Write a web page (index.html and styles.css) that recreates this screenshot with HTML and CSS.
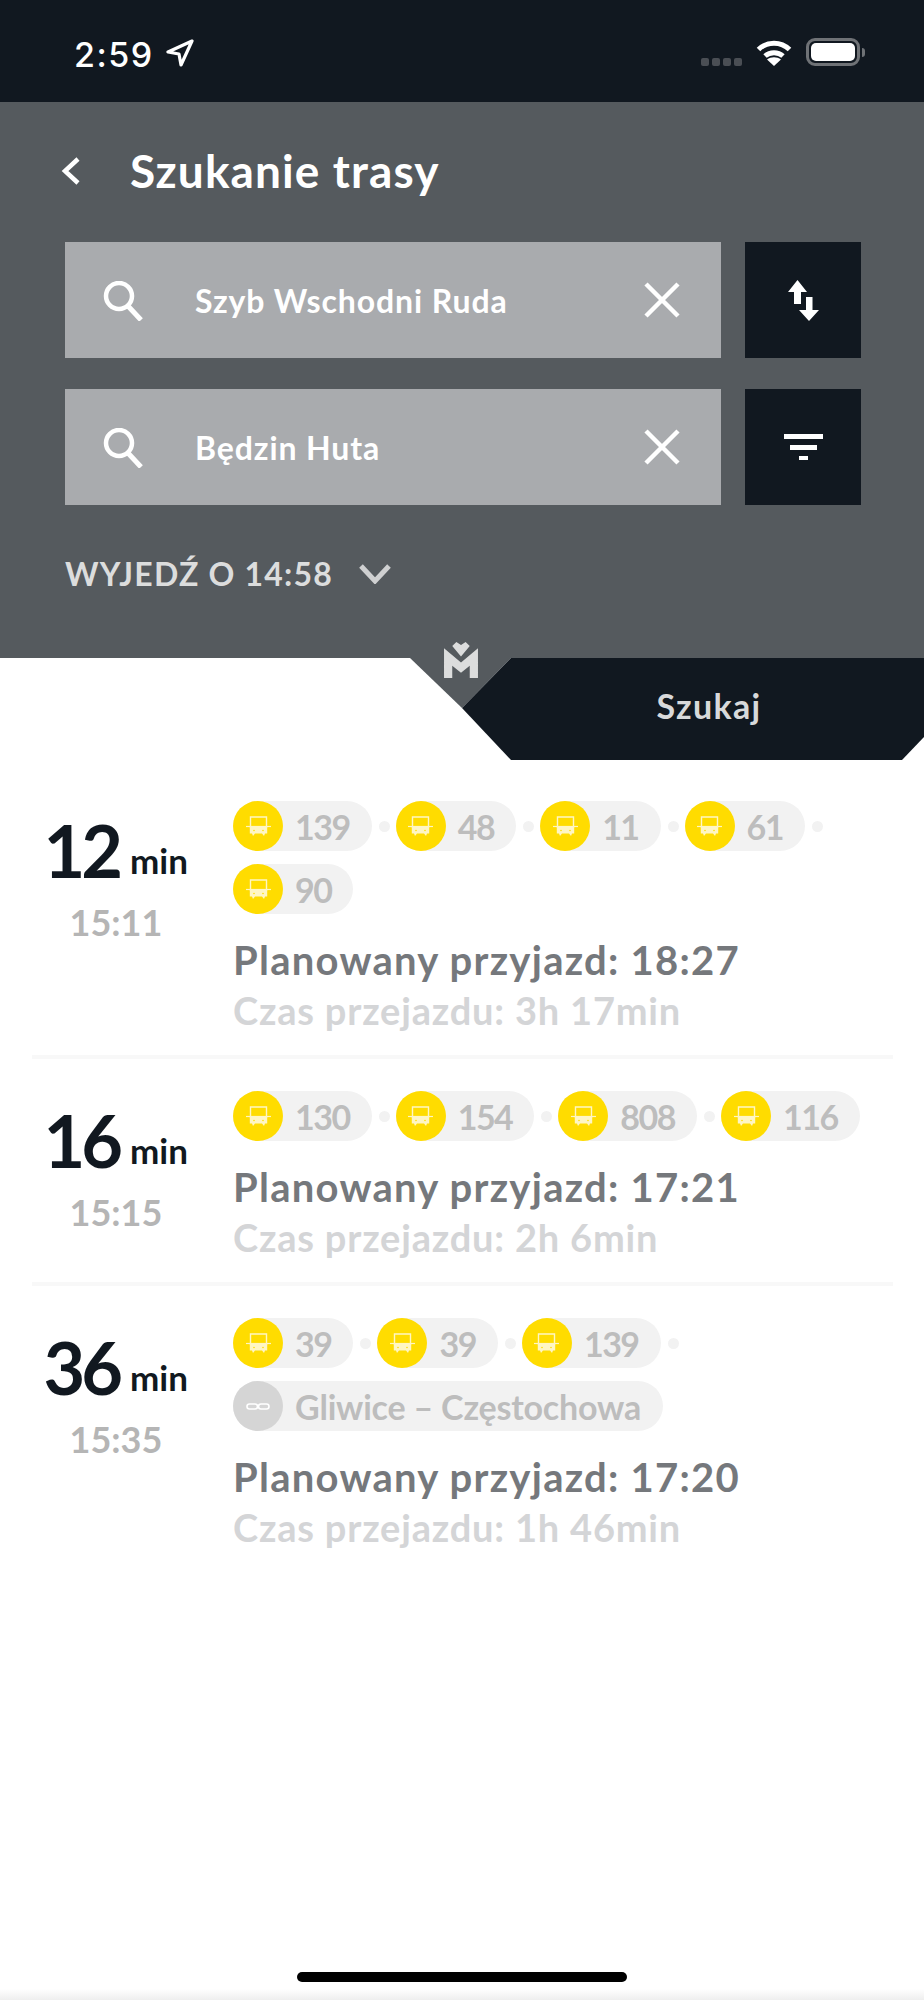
FILE: index.html
```html
<!DOCTYPE html>
<html lang="pl">
<head>
	<meta charset="UTF-8">
	<meta name="viewport" content="width=device-width, initial-scale=1.0" />
	<title>Szukanie trasy</title>
	<link rel="stylesheet" href="styles.css">
</head>
<body>
<svg class="defs" aria-hidden="true">
	<symbol id="bus" viewBox="0 0 25 21">
		<path d="M4.500 1h16v10h-16z" fill="none" stroke="#fff6c4" stroke-width="1.400"/>
		<path d="M0 10.500h25" stroke="#fff6c4" stroke-width="1.200"/>
		<path d="M3.800 11h17.400v6.500H19l-1 2.500-2-2.500H9l-2 2.500-1-2.500H3.800z" fill="#fff6c4"/>
		<circle cx="8" cy="14.500" r="0.800" fill="#ffdc00"/>
		<circle cx="17" cy="14.500" r="0.800" fill="#ffdc00"/>
	</symbol>
	<symbol id="search" viewBox="0 0 40 40">
		<circle cx="16" cy="15" r="13" fill="none" stroke="#fff" stroke-width="4.500"/>
		<path d="M25 25l13 14" stroke="#fff" stroke-width="5"/>
	</symbol>
	<symbol id="close" viewBox="0 0 36 36">
		<path d="M2 2l32 32M34 2L2 34" stroke="#fff" stroke-width="4.500"/>
	</symbol>
</svg>

<div class="screen">
	<div class="status">
		<div class="status-left">
			<span class="clock">2:59</span>
			<svg class="loc" viewBox="0 0 28 28"><path d="M26 2L2 13l11 2 2 11z" fill="none" stroke="#fff" stroke-width="3.200" stroke-linejoin="round"/></svg>
		</div>
		<div class="status-right">
			<div class="signal"><i></i><i></i><i></i><i></i></div>
			<svg class="wifi" viewBox="0 0 36 27">
				<path d="M2.500 10.500C11 2 25 2 33.500 10.500M9 17c5-4.500 13-4.500 18 0" fill="none" stroke="#fff" stroke-width="5"/>
				<path d="M18 27l-7-6.500c4-3 10-3 14 0z" fill="#fff"/>
			</svg>
			<div class="battery"><div class="battery-box"><div class="battery-fill"></div></div><div class="battery-nub"></div></div>
		</div>
	</div>

	<div class="head">
		<div class="title-row">
			<svg class="back" viewBox="0 0 20 28"><path d="M17 2L4 14l13 12" fill="none" stroke="#fff" stroke-width="4.500"/></svg>
			<h1>Szukanie trasy</h1>
		</div>
		<div class="search-row">
			<div class="field">
				<svg class="ico-search"><use href="#search"/></svg>
				<span class="field-text">Szyb Wschodni Ruda</span>
				<svg class="ico-close"><use href="#close"/></svg>
			</div>
			<div class="square">
				<svg class="ico-swap" viewBox="0 0 31 41"><path d="M9.500 0L19 12h-6v12H6V12H0zM18 17h6.500v13H31L21 41 11 30h7z" fill="#fff"/></svg>
			</div>
		</div>
		<div class="search-row">
			<div class="field">
				<svg class="ico-search"><use href="#search"/></svg>
				<span class="field-text">Będzin Huta</span>
				<svg class="ico-close"><use href="#close"/></svg>
			</div>
			<div class="square">
				<svg class="ico-filter" viewBox="0 0 39 26"><path d="M0 0h39v5H0zM6 11h27v5H6zM15 22h9v4h-9z" fill="#fff"/></svg>
			</div>
		</div>
		<div class="depart">
			<span>WYJEDŹ O 14:58</span>
			<svg class="ico-chevron" viewBox="0 0 32 20"><path d="M2 2l14 15L30 2" fill="none" stroke="#cfd0d1" stroke-width="5"/></svg>
		</div>
		<svg class="logo" viewBox="0 0 33 35">
			<path d="M0 6l16.500 14L33 6v29h-8V23l-8.500 7L8 23v12H0z" fill="#dcdddd"/>
			<path d="M16.500 14L8 4l4-4 4.500 3L21 0l4 4z" fill="#dcdddd"/>
		</svg>
	</div>

	<div class="action">
		<div class="wedge"></div>
		<div class="go">Szukaj</div>
	</div>

	<div class="list">
		<div class="route">
			<div class="eta">
				<div class="eta-main"><span class="eta-num">12</span><span class="eta-unit">min</span></div>
				<div class="eta-time">15:11</div>
			</div>
			<div class="info">
				<div class="legs">
					<div class="pill"><span class="badge"><svg class="ico-bus"><use href="#bus"/></svg></span>139</div><i class="dot"></i>
					<div class="pill"><span class="badge"><svg class="ico-bus"><use href="#bus"/></svg></span>48</div><i class="dot"></i>
					<div class="pill"><span class="badge"><svg class="ico-bus"><use href="#bus"/></svg></span>11</div><i class="dot"></i>
					<div class="pill"><span class="badge"><svg class="ico-bus"><use href="#bus"/></svg></span>61</div><i class="dot"></i>
					<div class="pill"><span class="badge"><svg class="ico-bus"><use href="#bus"/></svg></span>90</div>
				</div>
				<div class="arrival">Planowany przyjazd: 18:27</div>
				<div class="duration">Czas przejazdu: 3h 17min</div>
			</div>
		</div>
		<div class="route">
			<div class="eta">
				<div class="eta-main"><span class="eta-num">16</span><span class="eta-unit">min</span></div>
				<div class="eta-time">15:15</div>
			</div>
			<div class="info">
				<div class="legs">
					<div class="pill"><span class="badge"><svg class="ico-bus"><use href="#bus"/></svg></span>130</div><i class="dot"></i>
					<div class="pill"><span class="badge"><svg class="ico-bus"><use href="#bus"/></svg></span>154</div><i class="dot"></i>
					<div class="pill"><span class="badge"><svg class="ico-bus"><use href="#bus"/></svg></span>808</div><i class="dot"></i>
					<div class="pill"><span class="badge"><svg class="ico-bus"><use href="#bus"/></svg></span>116</div>
				</div>
				<div class="arrival">Planowany przyjazd: 17:21</div>
				<div class="duration">Czas przejazdu: 2h 6min</div>
			</div>
		</div>
		<div class="route">
			<div class="eta">
				<div class="eta-main"><span class="eta-num">36</span><span class="eta-unit">min</span></div>
				<div class="eta-time">15:35</div>
			</div>
			<div class="info">
				<div class="legs">
					<div class="pill"><span class="badge"><svg class="ico-bus"><use href="#bus"/></svg></span>39</div><i class="dot"></i>
					<div class="pill"><span class="badge"><svg class="ico-bus"><use href="#bus"/></svg></span>39</div><i class="dot"></i>
					<div class="pill"><span class="badge"><svg class="ico-bus"><use href="#bus"/></svg></span>139</div><i class="dot"></i>
					<div class="pill pill-name"><span class="badge badge-train"><svg class="ico-train" viewBox="0 0 24 7"><rect x="1" y="1" width="10.500" height="5" rx="2.500" fill="none" stroke="#fff" stroke-width="1.600"/><rect x="12.500" y="1" width="10.500" height="5" rx="2.500" fill="none" stroke="#fff" stroke-width="1.600"/></svg></span>Gliwice – Częstochowa</div>
				</div>
				<div class="arrival">Planowany przyjazd: 17:20</div>
				<div class="duration">Czas przejazdu: 1h 46min</div>
			</div>
		</div>
	</div>

	<div class="home"><div class="home-bar"></div></div>
</div>
</body>
</html>
```
FILE: styles.css
```css
*{box-sizing:border-box;}
body{margin:0;padding:0;background:#fff;font-family:"Lato","Liberation Sans",sans-serif;}
.defs{width:0;height:0;display:block;overflow:hidden;}
svg{display:block;}
.screen{width:924px;height:2000px;display:flex;flex-direction:column;overflow:hidden;}

/* status bar */
.status{height:102px;flex:none;background:#111820;display:flex;justify-content:space-between;padding:38px 59px 0 74px;}
.status-left{display:flex;align-items:flex-start;gap:12px;}
.clock{font-family:"Inter","Liberation Sans",sans-serif;font-weight:500;font-size:34px;line-height:34px;letter-spacing:1.500px;color:#fff;}
.loc{width:28px;height:28px;margin-top:1px;}
.status-right{display:flex;align-items:flex-start;}
.signal{display:flex;gap:3px;margin-top:20px;}
.signal i{display:block;width:8px;height:8px;border-radius:2px;background:#4a4e54;}
.wifi{width:36px;height:27px;margin:1px 14px 0 14px;}
.battery{display:flex;align-items:center;height:28px;}
.battery-box{width:54px;height:28px;border:3px solid #6f7276;border-radius:9px;padding:2px;}
.battery-fill{height:100%;background:#fff;border-radius:5px;}
.battery-nub{width:3px;height:9px;margin-left:2px;background:#6f7276;border-radius:0 3px 3px 0;}

/* header */
.head{position:relative;height:556px;flex:none;background:#555a5e;padding:0 63px 0 65px;}
.title-row{height:140px;display:flex;align-items:center;padding-bottom:3px;}
.back{width:20px;height:28px;margin:0 49px 0 -4px;}
h1{margin:0;font-size:46px;line-height:60px;font-weight:700;letter-spacing:1.100px;color:#fff;}
.search-row{display:flex;gap:24px;margin-bottom:31px;}
.field{flex:1;height:116px;background:#a9abae;display:flex;align-items:center;padding:0 41px 0 38px;}
.ico-search{width:40px;height:40px;margin-top:2px;}
.field-text{flex:1;margin-left:52px;font-size:32px;font-weight:700;letter-spacing:.9px;color:#fff;}
.ico-close{width:36px;height:36px;}
.square{width:116px;height:116px;background:#111820;display:flex;align-items:center;justify-content:center;}
.ico-swap{width:31px;height:41px;}
.ico-filter{width:39px;height:26px;}
.depart{display:flex;align-items:center;gap:26px;padding-top:16px;font-size:32px;font-weight:700;letter-spacing:1.200px;color:#dcdddd;line-height:44px;}
.ico-chevron{width:32px;height:20px;}
.logo{position:absolute;z-index:2;left:444px;top:540px;width:34px;height:36px;}

/* szukaj */
.action{height:102px;flex:none;display:grid;}
.wedge,.go{grid-area:1/1;}
.wedge{background:#555a5e;clip-path:polygon(410px 0,511px 0,462px 50px);}
.go{background:#111820;clip-path:polygon(511px 0,924px 0,924px 79px,902px 102px,511px 102px,462px 50px);display:flex;align-items:center;justify-content:center;padding:0 0 8px 494px;font-size:34px;font-weight:700;letter-spacing:1.300px;color:#d8d9da;}

/* list */
.list{flex:1;padding-top:9px;}
.route{display:flex;padding:32px 0 21px 0;margin:0 31px 0 32px;border-bottom:4px solid #f8f8f8;}
.route:last-child{border-bottom:0;}
.eta{width:156px;margin-right:45px;flex:none;}
.eta-main{display:flex;align-items:flex-end;justify-content:flex-end;height:98px;color:#111820;}
.eta-num{font-size:72px;line-height:98px;font-weight:700;letter-spacing:-4px;margin-right:11px;}
.eta-unit{font-size:35px;line-height:77px;font-weight:700;}
.eta-time{text-align:center;padding-left:12px;font-size:36px;line-height:46px;font-weight:700;color:#b5b5b5;}
.info{flex:1;width:0;}
.legs{display:flex;flex-wrap:wrap;align-items:center;gap:13px 0;}
.pill{height:50px;border-radius:25px;background:#f2f2f2;display:flex;align-items:center;gap:12px;padding-right:22px;font-size:34px;font-weight:700;letter-spacing:-1.500px;color:#bdbdbd;}
.pill-name{letter-spacing:-0.200px;}
.badge{width:50px;height:50px;border-radius:50%;background:#ffdc00;display:flex;align-items:center;justify-content:center;flex:none;}
.badge-train{background:#d5d5d5;}
.ico-bus{width:25px;height:21px;}
.ico-train{width:24px;height:7px;}
.dot{width:11px;height:11px;border-radius:50%;background:#f2f2f2;margin:0 6px 0 7px;flex:none;}
.arrival{margin-top:22px;font-size:40px;line-height:48px;font-weight:700;letter-spacing:1.250px;color:#75787c;}
.duration{margin-top:2px;font-size:38px;line-height:48px;font-weight:700;letter-spacing:.8px;color:#d4d5d7;}

/* home indicator */
.home{height:28px;flex:none;padding:0 297px;background:linear-gradient(#fff 60%,#eee 100%);}
.home-bar{height:10px;background:#000;border-radius:5px;}
```
